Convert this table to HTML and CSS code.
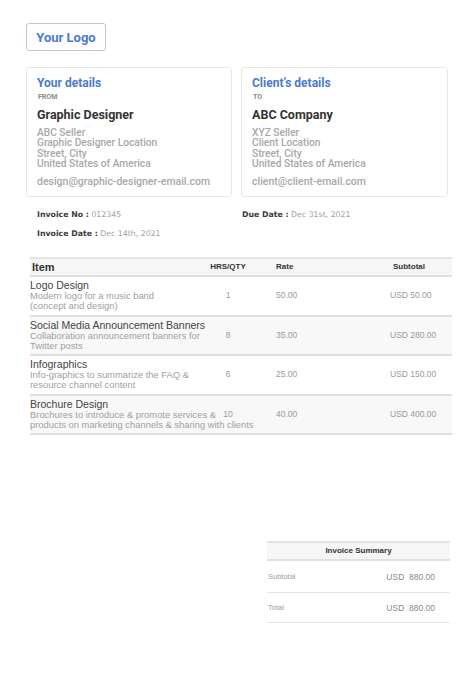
FILE: index.html
```html
<!DOCTYPE html>
<html lang="en">
<head>
  <meta charset="UTF-8" />
  <meta name="viewport" content="width=device-width, initial-scale=1.0"/>
  <title>Invoice</title>
  <link rel="stylesheet" href="styles.css">
</head>
<body>
  <div class="page">
    <div class="logo">Your Logo</div>

    <!-- parties -->
    <div class="parties">
      <div class="card">
        <div class="card-title">Your details</div>
        <div class="card-label">FROM</div>
        <div class="card-name">Graphic Designer</div>
        <div class="card-address">ABC Seller<br>Graphic Designer Location<br>Street, City<br>United States of America</div>
        <div class="card-email">design@graphic-designer-email.com</div>
      </div>
      <div class="card">
        <div class="card-title">Client’s details</div>
        <div class="card-label">TO</div>
        <div class="card-name">ABC Company</div>
        <div class="card-address">XYZ Seller<br>Client Location<br>Street, City<br>United States of America</div>
        <div class="card-email">client@client-email.com</div>
      </div>
    </div>

    <!-- invoice meta -->
    <div class="meta">
      <div class="meta-item"><b>Invoice No :</b> 012345</div>
      <div class="meta-item"><b>Due Date :</b> Dec 31st, 2021</div>
      <div class="meta-item"><b>Invoice Date :</b> Dec 14th, 2021</div>
    </div>

    <!-- items -->
    <div class="items">
      <div class="row head">
        <div class="c-item">Item</div>
        <div class="c-qty">HRS/QTY</div>
        <div class="c-rate">Rate</div>
        <div class="c-sub">Subtotal</div>
      </div>
      <div class="row">
        <div class="c-item">
          <div class="item-name">Logo Design</div>
          <div class="item-desc">Modern logo for a music band<br>(concept and design)</div>
        </div>
        <div class="c-qty">1</div>
        <div class="c-rate">50.00</div>
        <div class="c-sub">USD 50.00</div>
      </div>
      <div class="row alt">
        <div class="c-item">
          <div class="item-name">Social Media Announcement Banners</div>
          <div class="item-desc">Collaboration announcement banners for<br>Twitter posts</div>
        </div>
        <div class="c-qty">8</div>
        <div class="c-rate">35.00</div>
        <div class="c-sub">USD 280.00</div>
      </div>
      <div class="row">
        <div class="c-item">
          <div class="item-name">Infographics</div>
          <div class="item-desc">Info-graphics to summarize the FAQ &amp;<br>resource channel content</div>
        </div>
        <div class="c-qty">6</div>
        <div class="c-rate">25.00</div>
        <div class="c-sub">USD 150.00</div>
      </div>
      <div class="row alt">
        <div class="c-item">
          <div class="item-name">Brochure Design</div>
          <div class="item-desc">Brochures to introduce &amp; promote services &amp;<br>products on marketing channels &amp; sharing with clients</div>
        </div>
        <div class="c-qty">10</div>
        <div class="c-rate">40.00</div>
        <div class="c-sub">USD 400.00</div>
      </div>
    </div>

    <!-- summary -->
    <div class="summary">
      <div class="summary-head">Invoice Summary</div>
      <div class="summary-row">
        <span>Subtotal</span>
        <span class="amount">USD&nbsp; 880.00</span>
      </div>
      <div class="summary-row">
        <span>Total</span>
        <span class="amount">USD&nbsp; 880.00</span>
      </div>
    </div>
  </div>
</body>
</html>
```

FILE: styles.css
```css
* {
  margin: 0;
  padding: 0;
  box-sizing: border-box;
}
html, body {
  background: #fff;
  font-family: Roboto, "Liberation Sans", sans-serif;
  color: #333;
}
.page {
  padding: 23px 26px 40px 26px;
}

.logo {
  width: 80px;
  height: 28px;
  border: 1px solid #b9c9e2;
  border-radius: 3px;
  color: #4a7bcc;
  font-size: 13px;
  font-weight: bold;
  display: flex;
  align-items: center;
  justify-content: center;
}

/* parties */
.parties {
  margin-top: 16px;
  display: grid;
  grid-template-columns: 206px 207px;
  gap: 9px;
}
.card {
  height: 130px;
  border: 1px solid #e6e6e6;
  border-radius: 3px;
  padding: 7px 10px 0 10px;
}
.card-title {
  color: #4a7bcc;
  font-size: 12px;
  font-weight: bold;
  line-height: 16px;
}
.card-label {
  margin-top: 2px;
  font-size: 7px;
  font-weight: bold;
  color: #8a8a8a;
  line-height: 9px;
  padding-left: 1px;
}
.card-name {
  margin-top: 5px;
  font-size: 12.5px;
  font-weight: bold;
  line-height: 16px;
  color: #333;
}
.card-address {
  margin-top: 5px;
  font-size: 10.2px;
  line-height: 10.4px;
  color: #a8a8a8;
  font-weight: 500;
}
.card-email {
  margin-top: 6px;
  font-size: 10.5px;
  line-height: 12px;
  color: #a8a8a8;
  font-weight: 500;
}

/* meta */
.meta {
  margin-top: 12px;
  display: grid;
  grid-template-columns: 205px 217px;
  row-gap: 8px;
  padding-left: 11px;
  font-family: "DejaVu Sans", sans-serif;
  font-size: 7.8px;
  line-height: 11px;
  color: #a0a0a0;
}
.meta-item b {
  color: #3a3a3a;
}

/* items table */
.items {
  margin-top: 18px;
  margin-left: 4px;
  width: 422px;
  font-family: "Liberation Sans", Arial, sans-serif;
  border-top: 2px solid #e4e4e4;
}
.row {
  display: grid;
  grid-template-columns: 172px 52px 134px 64px;
  align-items: center;
  border-bottom: 2px solid #e0e0e0;
  padding: 2px 0 3.5px 0;
}
.row.alt {
  background: #f8f8f8;
}
.row.head {
  background: #f6f6f6;
  padding: 2px 0 2px 0;
  font-size: 8px;
  font-weight: bold;
  color: #333;
  line-height: 12px;
}
.row.head .c-item {
  padding-left: 2px;
  font-size: 11px;
}
.row.head .c-sub {
  padding-left: 5px;
}
.c-item {
  white-space: nowrap;
}
.c-qty {
  text-align: center;
}
.c-rate {
  padding-left: 22px;
}
.c-sub {
  padding-left: 2px;
  white-space: nowrap;
}
.row:not(.head) .c-qty,
.row:not(.head) .c-rate,
.row:not(.head) .c-sub {
  font-size: 8.5px;
  color: #9a9a9a;
}
.item-name {
  font-size: 10.5px;
  line-height: 12px;
  color: #444;
}
.item-desc {
  font-size: 9.4px;
  line-height: 10px;
  color: #a0a0a0;
}

/* summary */
.summary {
  margin-top: 106px;
  margin-left: auto;
  margin-right: -2px;
  width: 183px;
  font-family: "Liberation Sans", Arial, sans-serif;
  border-top: 2px solid #e4e4e4;
}
.summary-head {
  background: #f6f6f6;
  text-align: center;
  font-size: 8px;
  font-weight: bold;
  line-height: 16px;
  border-bottom: 2px solid #e0e0e0;
}
.summary-row {
  display: flex;
  justify-content: space-between;
  align-items: center;
  height: 32px;
  padding: 0 15px 0 1px;
  border-bottom: 1px solid #e4e4e4;
  font-size: 7.5px;
  color: #a0a0a0;
}
.summary-row:last-child {
  height: 30px;
}
.summary-row .amount {
  font-size: 8.5px;
  color: #8a8a8a;
}
```
